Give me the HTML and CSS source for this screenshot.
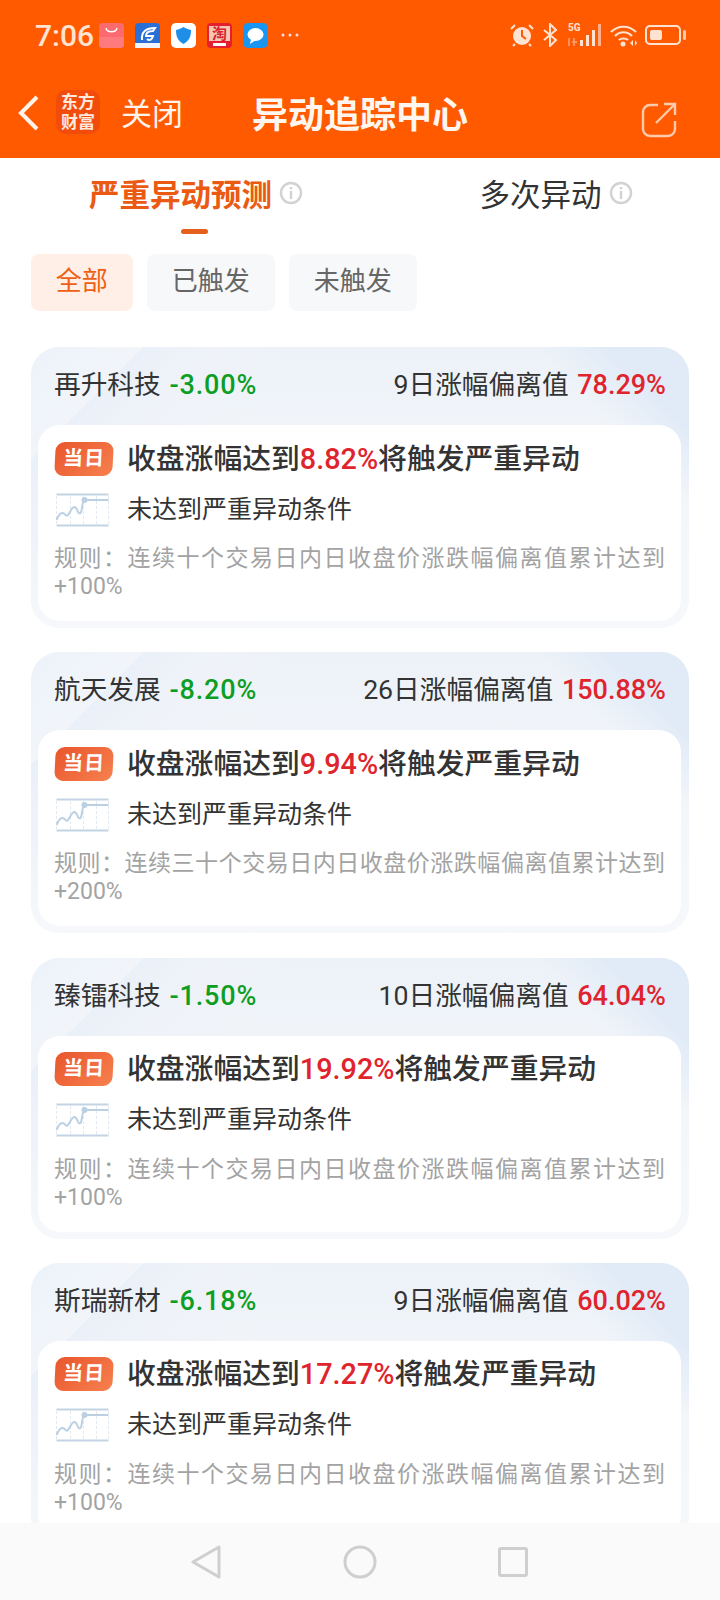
FILE: index.html
```html
<!DOCTYPE html>
<html lang="zh-CN">
<head>
    <meta charset="UTF-8">
    <meta name="viewport" content="width=device-width, initial-scale=1.0">
    <title>异动追踪中心</title>
    <link rel="stylesheet" href="styles.css">
</head>
<body>
    <svg class="defs" width="0" height="0">
        <symbol id="chart" viewBox="0 0 54 34">
            <path d="M1 1.500H53M1 32.500H53" stroke="#c3d3e4" stroke-width="2" fill="none"/>
            <path d="M15 3V31M28 3V31M41 3V31M1 3V31M53 3V31" stroke="#e3e9f0" stroke-width="1" stroke-dasharray="3 2" fill="none"/>
            <path d="M1 27C4 20 7 18 10 22C13 26 15 14 19 14C22 14 22 22 25 20C27 18 26 9 29 7H53" stroke="#bcd0e3" stroke-width="2" fill="none"/>
            <circle cx="29" cy="7" r="3" fill="#bcd0e3"/>
        </symbol>
        <symbol id="info" viewBox="0 0 24 24">
            <circle cx="12" cy="12" r="10" fill="none" stroke="#d2d2d2" stroke-width="2.400"/>
            <rect x="10.800" y="10" width="2.400" height="8" fill="#d2d2d2"/>
            <rect x="10.800" y="6" width="2.400" height="2.400" fill="#d2d2d2"/>
        </symbol>
    </svg>

    <div class="header">
        <div class="statusbar">
            <span class="time">7:06</span>
            <div class="apps">
                <svg class="app" viewBox="0 0 25 25"><rect width="25" height="25" rx="4" fill="#fb6a6f"/><path d="M0 14H25V21a4 4 0 0 1-4 4H4a4 4 0 0 1-4-4Z" fill="#fd7b7c"/><path d="M7 5C8 10 17 10 18 5" stroke="#fff" stroke-width="1.400" fill="none"/></svg>
                <svg class="app" viewBox="0 0 25 25"><rect width="25" height="25" rx="4" fill="#2a6fd6"/><path d="M7 17C6 9 11 5 20 5L18 8C13 8 11 10 11 13H18C17 17 14 18 12 16" stroke="#fff" stroke-width="2" fill="none"/><rect y="20" width="25" height="5" fill="#f2f6fc"/></svg>
                <svg class="app" viewBox="0 0 25 25"><rect width="25" height="25" rx="5" fill="#fff"/><path d="M5 7C9 6 11 5 12.500 4C14 5 16 6 20 7C20 14 18 18 12.500 21C7 18 5 14 5 7Z" fill="#1e8fe8"/></svg>
                <svg class="app" viewBox="0 0 25 25"><rect width="25" height="25" rx="4" fill="#e4202f"/><rect x="2" y="3" width="21" height="15" fill="#f6c7b5"/><text x="12.500" y="16" text-anchor="middle" font-size="15" font-weight="700" fill="#d8232f" font-family="Noto Sans CJK SC">淘</text><rect x="6" y="20" width="13" height="3" fill="#fff"/></svg>
                <svg class="app" viewBox="0 0 25 25"><rect width="25" height="25" rx="5" fill="#1a96f0"/><ellipse cx="12.500" cy="11.500" rx="8" ry="6.500" fill="#fff"/><path d="M8 16L7 21L13 17Z" fill="#fff"/></svg>
                <svg class="dots" viewBox="0 0 18 4"><circle cx="2" cy="2" r="1.500" fill="#fdd"/><circle cx="9" cy="2" r="1.500" fill="#fdd"/><circle cx="16" cy="2" r="1.500" fill="#fdd"/></svg>
            </div>
            <div class="sys">
                <svg width="24" height="24" viewBox="0 0 24 24"><circle cx="12" cy="13" r="9" fill="#ffe3d2"/><path d="M12 7V13L16 16" stroke="#ff5a00" stroke-width="2" fill="none"/><path d="M1 6L5 2M23 6L19 2M5 21L3 23M19 21L21 23" stroke="#ffe3d2" stroke-width="2"/></svg>
                <svg width="16" height="24" viewBox="0 0 16 24"><path d="M2 7L14 17L8 23V1L14 7L2 17" stroke="#ffe3d2" stroke-width="2" fill="none"/></svg>
                <div class="net">
                    <span class="g5">5G</span>
                    <svg width="34" height="22" viewBox="0 0 34 22"><rect x="12" y="16" width="3" height="6" fill="#ffe3d2"/><rect x="18" y="11" width="3" height="11" fill="#ffe3d2"/><rect x="24" y="6" width="3" height="16" fill="#ffe3d2"/><rect x="30" y="0" width="3" height="22" fill="#ffb08a"/><path d="M1 14V22M6 14V22M9 18H4" stroke="#ffa57a" stroke-width="1.500" fill="none"/></svg>
                </div>
                <svg width="27" height="23" viewBox="0 0 27 23"><path d="M1 8C8 1 19 1 26 8M5 12C10 7 17 7 22 12M9 16C11 14 16 14 18 16" stroke="#ffe3d2" stroke-width="2.200" fill="none"/><circle cx="13" cy="20" r="2.500" fill="#ffe3d2"/><path d="M20 19L23 16V22ZM25 16L27 19L25 22Z" fill="#ffe3d2"/></svg>
                <div class="battery"><div class="level"></div></div>
            </div>
        </div>
        <div class="navbar">
            <div class="nav-left">
                <svg class="back" width="22" height="36" viewBox="0 0 22 36"><path d="M19 2L3 18L19 34" stroke="#fff4ec" stroke-width="4" fill="none"/></svg>
                <div class="logo">东方<br>财富</div>
                <span class="close">关闭</span>
            </div>
            <div class="nav-title">异动追踪中心</div>
            <svg class="share" width="36" height="36" viewBox="0 0 36 36"><path d="M17 3H9A7 7 0 0 0 2 10V27A7 7 0 0 0 9 34H27A7 7 0 0 0 34 27V19" stroke="#ffc9ab" stroke-width="2.400" fill="none"/><path d="M15 21L34 2M23 2H34V13" stroke="#ffc9ab" stroke-width="2.400" fill="none"/></svg>
        </div>
    </div>

    <div class="tabs">
        <div class="tab active">严重异动预测 <svg class="info"><use href="#info"/></svg></div>
        <div class="tab">多次异动 <svg class="info"><use href="#info"/></svg></div>
    </div>

    <div class="chips">
        <div class="chip on">全部</div>
        <div class="chip">已触发</div>
        <div class="chip">未触发</div>
    </div>

    <div class="list">
        <div class="card">
            <div class="card-head">
                <div>再升科技 <span class="down">-3.00%</span></div>
                <div>9日涨幅偏离值 <span class="up">78.29%</span></div>
            </div>
            <div class="card-body">
                <div class="line-main"><span class="today">当日</span><div>收盘涨幅达到<span class="up">8.82%</span>将触发严重异动</div></div>
                <div class="line-sub"><svg class="chart"><use href="#chart"/></svg><div>未达到严重异动条件</div></div>
                <p class="rule">规则：连续十个交易日内日收盘价涨跌幅偏离值累计达到 +100%</p>
            </div>
        </div>
        <div class="card">
            <div class="card-head">
                <div>航天发展 <span class="down">-8.20%</span></div>
                <div>26日涨幅偏离值 <span class="up">150.88%</span></div>
            </div>
            <div class="card-body">
                <div class="line-main"><span class="today">当日</span><div>收盘涨幅达到<span class="up">9.94%</span>将触发严重异动</div></div>
                <div class="line-sub"><svg class="chart"><use href="#chart"/></svg><div>未达到严重异动条件</div></div>
                <p class="rule">规则：连续三十个交易日内日收盘价涨跌幅偏离值累计达到 +200%</p>
            </div>
        </div>
        <div class="card">
            <div class="card-head">
                <div>臻镭科技 <span class="down">-1.50%</span></div>
                <div>10日涨幅偏离值 <span class="up">64.04%</span></div>
            </div>
            <div class="card-body">
                <div class="line-main"><span class="today">当日</span><div>收盘涨幅达到<span class="up">19.92%</span>将触发严重异动</div></div>
                <div class="line-sub"><svg class="chart"><use href="#chart"/></svg><div>未达到严重异动条件</div></div>
                <p class="rule">规则：连续十个交易日内日收盘价涨跌幅偏离值累计达到 +100%</p>
            </div>
        </div>
        <div class="card">
            <div class="card-head">
                <div>斯瑞新材 <span class="down">-6.18%</span></div>
                <div>9日涨幅偏离值 <span class="up">60.02%</span></div>
            </div>
            <div class="card-body">
                <div class="line-main"><span class="today">当日</span><div>收盘涨幅达到<span class="up">17.27%</span>将触发严重异动</div></div>
                <div class="line-sub"><svg class="chart"><use href="#chart"/></svg><div>未达到严重异动条件</div></div>
                <p class="rule">规则：连续十个交易日内日收盘价涨跌幅偏离值累计达到 +100%</p>
            </div>
        </div>
    </div>

    <div class="bottom-nav">
        <svg width="32" height="34" viewBox="0 0 32 34"><path d="M29 2V32L3 17Z" stroke="#cfcfcf" stroke-width="3" stroke-linejoin="round" fill="none"/></svg>
        <svg width="34" height="34" viewBox="0 0 34 34"><circle cx="17" cy="17" r="15" stroke="#cfcfcf" stroke-width="3" fill="none"/></svg>
        <svg width="30" height="30" viewBox="0 0 30 30"><rect x="1.500" y="1.500" width="27" height="27" rx="1.500" stroke="#cfcfcf" stroke-width="3" fill="none"/></svg>
    </div>
</body>
</html>
```

FILE: styles.css
```css
* {
    margin: 0;
    padding: 0;
    box-sizing: border-box;
}

html, body {
    height: 1600px;
    overflow: hidden;
}

body {
    display: flex;
    flex-direction: column;
    font-family: Roboto, 'Noto Sans CJK SC', sans-serif;
    background: #fff;
    color: #333;
}

.defs {
    position: absolute;
}

.header {
    height: 158px;
    flex: none;
    background: #ff5a00;
}

.statusbar {
    height: 70px;
    display: flex;
    align-items: center;
    padding: 0 35px;
    color: #ffe3d2;
}

.time {
    font-size: 30px;
    font-weight: 500;
    width: 64px;
}

.apps {
    display: flex;
    align-items: center;
    gap: 11px;
}

.app {
    width: 25px;
    height: 25px;
}

.dots {
    width: 18px;
    height: 4px;
    margin-left: 2px;
}

.sys {
    margin-left: auto;
    display: flex;
    align-items: center;
    gap: 8px;
}

.net {
    position: relative;
    width: 34px;
    height: 22px;
    margin-left: 2px;
}

.g5 {
    position: absolute;
    top: -2px;
    left: 0;
    font-size: 10px;
    font-weight: 700;
    color: #ffe3d2;
}

.battery {
    position: relative;
    width: 36px;
    height: 20px;
    margin-right: 4px;
    padding: 3px;
    border: 2px solid #ffe3d2;
    border-radius: 5px;
}

.battery::after {
    content: '';
    position: absolute;
    top: 3px;
    right: -7px;
    width: 3px;
    height: 10px;
    border-radius: 2px;
    background: #ffc9ab;
}

.level {
    width: 12px;
    height: 100%;
    border-radius: 2px;
    background: #ffe3d2;
}

.navbar {
    position: relative;
    height: 88px;
    display: flex;
    align-items: center;
    justify-content: space-between;
    padding: 0 43px 5px 18px;
}

.nav-left {
    display: flex;
    align-items: center;
}

.back {
    margin-top: 3px;
}

.logo {
    width: 44px;
    height: 44px;
    margin-left: 16px;
    border-radius: 10px;
    background: #f24c0c;
    color: #ffe9dc;
    font-size: 17px;
    font-weight: 700;
    line-height: 20px;
    text-align: center;
    padding-top: 2px;
}

.close {
    margin-left: 21px;
    font-size: 31px;
    color: #fff4ec;
}

.nav-title {
    position: absolute;
    left: 0;
    right: 0;
    text-align: center;
    font-size: 36px;
    font-weight: 700;
    color: #fff6f0;
    pointer-events: none;
}

.share {
    margin-top: 17px;
}

.tabs {
    height: 82px;
    flex: none;
    display: flex;
}

.tab {
    position: relative;
    width: 360px;
    display: flex;
    align-items: center;
    justify-content: center;
    gap: 7px;
    padding: 0 0 12px 32px;
    font-size: 30.500px;
    color: #333;
}

.tab.active {
    color: #ea5a12;
    font-weight: 700;
}

.tab.active::after {
    content: '';
    position: absolute;
    left: 181px;
    bottom: 6px;
    width: 27px;
    height: 5px;
    border-radius: 3px;
    background: #e4601c;
}

.info {
    width: 24px;
    height: 24px;
}

.chips {
    flex: none;
    display: flex;
    gap: 14.500px;
    margin: 14px 0 36px 31px;
}

.chip {
    height: 57px;
    padding: 0 24.750px;
    border-radius: 8px;
    background: #f7f8fa;
    color: #666;
    font-size: 26px;
    line-height: 55px;
}

.chip.on {
    background: #ffefe7;
    color: #ee5f14;
}

.list {
    flex: 1;
    min-height: 0;
    overflow: hidden;
    padding: 0 31px;
    display: flex;
    flex-direction: column;
    gap: 24.300px;
}

.card {
    flex: none;
    height: 281px;
    border-radius: 28px;
    background:
        linear-gradient(135deg, rgba(255,255,255,0.35) 0 12%, transparent 12% 100%),
        linear-gradient(225deg, #e1ebf7 0, #e1ebf7 60px, transparent 110px),
        linear-gradient(135deg, #e3ecf7 0, #eff3f9 130px, transparent 200px),
        linear-gradient(180deg, #edf2f8 0, #f0f4f9 70px, #f6f8fb 100%);
}

.card-head {
    height: 78px;
    display: flex;
    align-items: center;
    justify-content: space-between;
    padding: 0 23px 7px 23px;
    font-size: 26.700px;
    color: #333;
}

.card-head span {
    margin-left: 2px;
    font-size: 27px;
    font-weight: 500;
}

.card-head .down {
    letter-spacing: 0.900px;
}

.card-body {
    height: 196px;
    margin: 0 8px 0 7px;
    padding: 16.500px 16px 0 17px;
    border-radius: 22px;
    background: #fff;
}

.up {
    color: #e0242e;
}

.down {
    color: #0d9e24;
}

.line-main {
    display: flex;
    align-items: center;
    gap: 14px;
    height: 34px;
    font-size: 28.800px;
    font-weight: 500;
    line-height: 34px;
}

.today {
    flex: none;
    width: 58px;
    height: 34px;
    border-radius: 9px;
    background: linear-gradient(135deg, #e8562c, #f7804f);
    color: #fff;
    font-size: 20px;
    font-weight: 700;
    line-height: 33px;
    text-align: center;
    letter-spacing: 1px;
    transform: skewX(-3deg);
}

.line-sub {
    display: flex;
    align-items: center;
    gap: 17px;
    height: 34px;
    margin-top: 17px;
    font-size: 25px;
    line-height: 34px;
}

.chart {
    width: 55px;
    height: 34px;
}

.rule {
    margin: 18.500px 0 0 -1px;
    font-size: 23px;
    line-height: 28px;
    color: #a3a3a3;
    text-align: justify;
}

.bottom-nav {
    flex: none;
    height: 77px;
    display: flex;
    align-items: center;
    background: #fafafa;
    padding: 0 192px 0 190px;
    justify-content: space-between;
}
```
